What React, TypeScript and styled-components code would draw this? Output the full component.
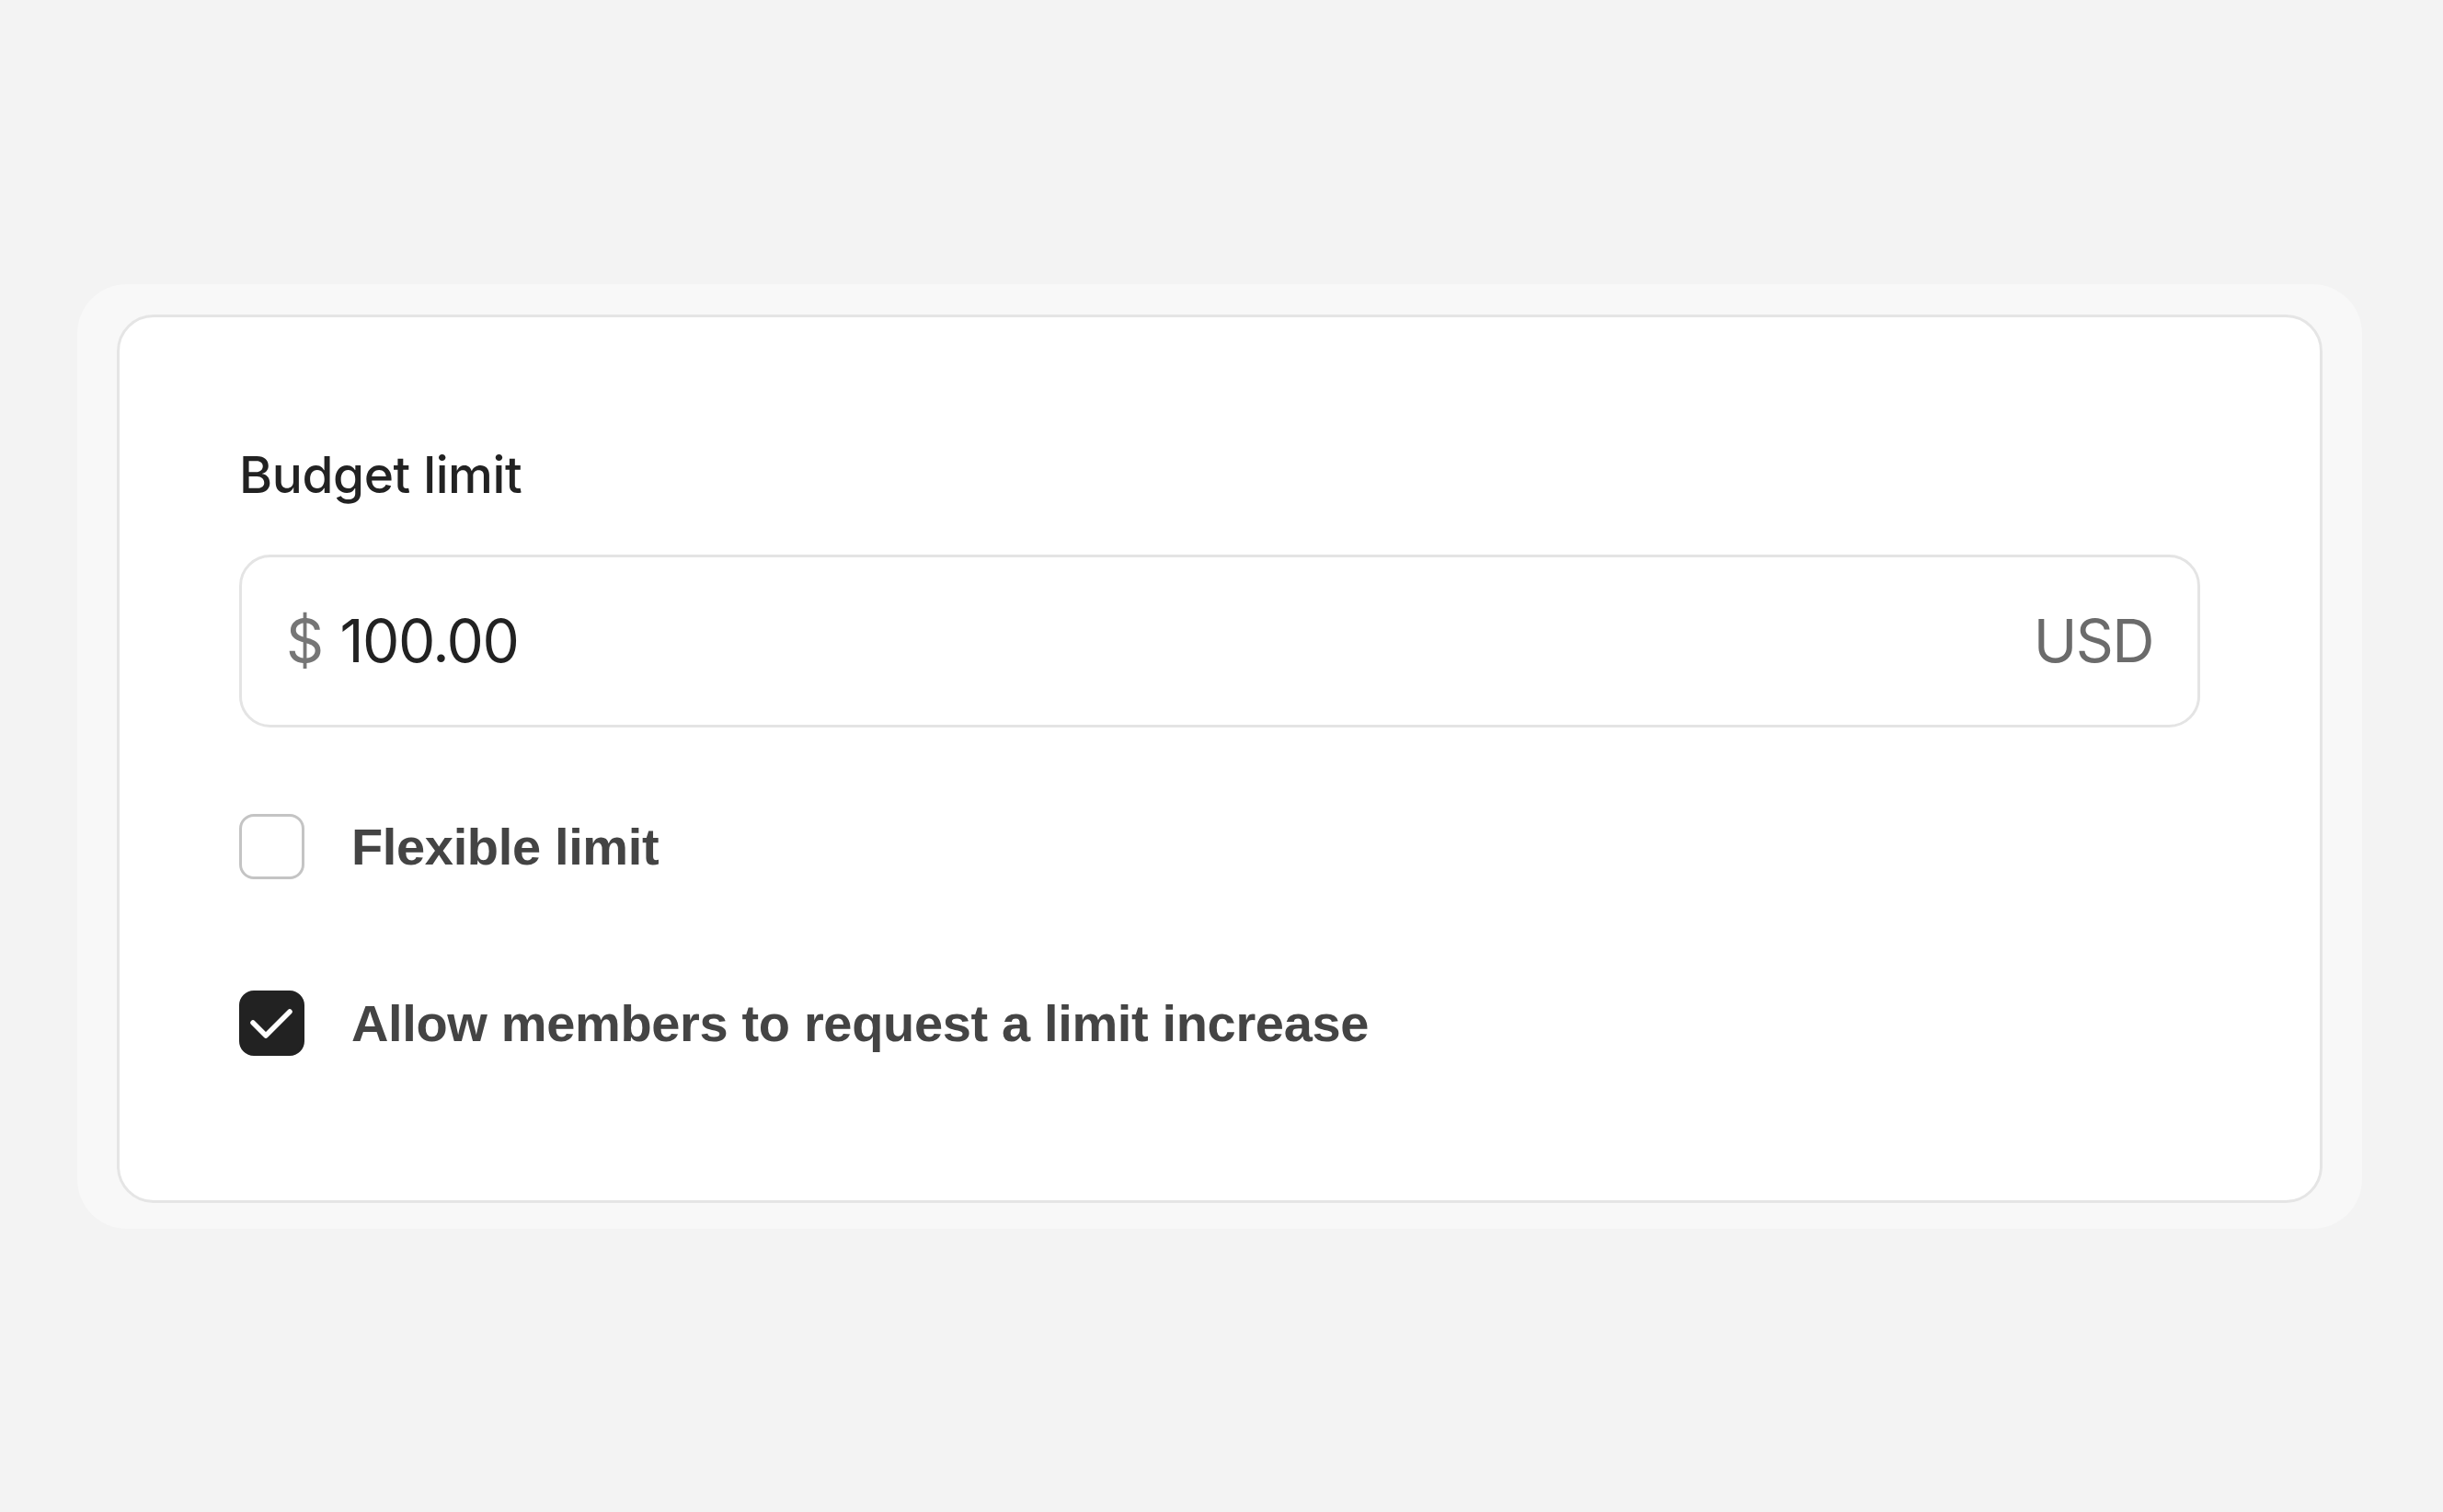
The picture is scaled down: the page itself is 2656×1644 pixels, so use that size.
import React from "react";
import styled, { createGlobalStyle } from "styled-components";

const GlobalStyle = createGlobalStyle`
  html, body {
    margin: 0;
    padding: 0;
    background: #f3f3f3;
  }
  * {
    box-sizing: border-box;
  }
`;

const Page = styled.main`
  min-height: 100vh;
  padding-right: 4px;
  display: flex;
  align-items: center;
  justify-content: center;
`;

const Frame = styled.div`
  background: #f8f8f8;
  border-radius: 54px;
  padding: 33px 43px 28px;
`;

const Card = styled.section`
  width: 2398px;
  background: #ffffff;
  border: 3px solid #e5e5e5;
  border-radius: 40px;
  padding: 138px 130px 157px;
  display: flex;
  flex-direction: column;
`;

const Label = styled.label`
  font-family: Inter, "Noto Sans", sans-serif;
  font-weight: 500;
  font-size: 55px;
  line-height: 66px;
  color: #222222;
  letter-spacing: -0.4px;
`;

const Field = styled.div`
  margin-top: 54px;
  height: 188px;
  border: 3px solid #e4e4e4;
  border-radius: 34px;
  padding: 0 48px;
  display: flex;
  align-items: center;
  gap: 19px;
  font-family: Inter, "Noto Sans", sans-serif;
  font-size: 64px;
  letter-spacing: -1.5px;
`;

const Currency = styled.span`
  color: #767676;
`;

const Amount = styled.span`
  color: #222222;
  flex: 1;
`;

const Code = styled.span`
  color: #6b6b6b;
`;

const Option = styled.div<{ $gap: number }>`
  margin-top: ${(p) => p.$gap}px;
  display: flex;
  align-items: center;
  gap: 51px;
  height: 71px;
`;

const Box = styled.span<{ $checked?: boolean }>`
  flex: none;
  width: 71px;
  height: 71px;
  border-radius: 16px;
  border: 3px solid ${(p) => (p.$checked ? "#222222" : "#c4c4c4")};
  background: ${(p) => (p.$checked ? "#222222" : "#ffffff")};
  display: flex;
  align-items: center;
  justify-content: center;
`;

const OptionText = styled.span`
  font-family: "Liberation Sans", Arial, sans-serif;
  font-weight: 700;
  font-size: 56px;
  letter-spacing: -0.35px;
  color: #444444;
`;

const Check = () => (
  <svg width="65" height="65" viewBox="0 0 65 65">
    <polyline
      points="12,32 26,46 52,20"
      fill="none"
      stroke="#ffffff"
      strokeWidth="5.5"
      strokeLinecap="round"
      strokeLinejoin="round"
    />
  </svg>
);

export default function App() {
  return (
    <>
      <GlobalStyle />
      <Page>
        <Frame>
          <Card>
            <Label>Budget limit</Label>
            <Field>
              <Currency>$</Currency>
              <Amount>100.00</Amount>
              <Code>USD</Code>
            </Field>
            <Option $gap={94}>
              <Box />
              <OptionText>Flexible limit</OptionText>
            </Option>
            <Option $gap={121}>
              <Box $checked>
                <Check />
              </Box>
              <OptionText>Allow members to request a limit increase</OptionText>
            </Option>
          </Card>
        </Frame>
      </Page>
    </>
  );
}
